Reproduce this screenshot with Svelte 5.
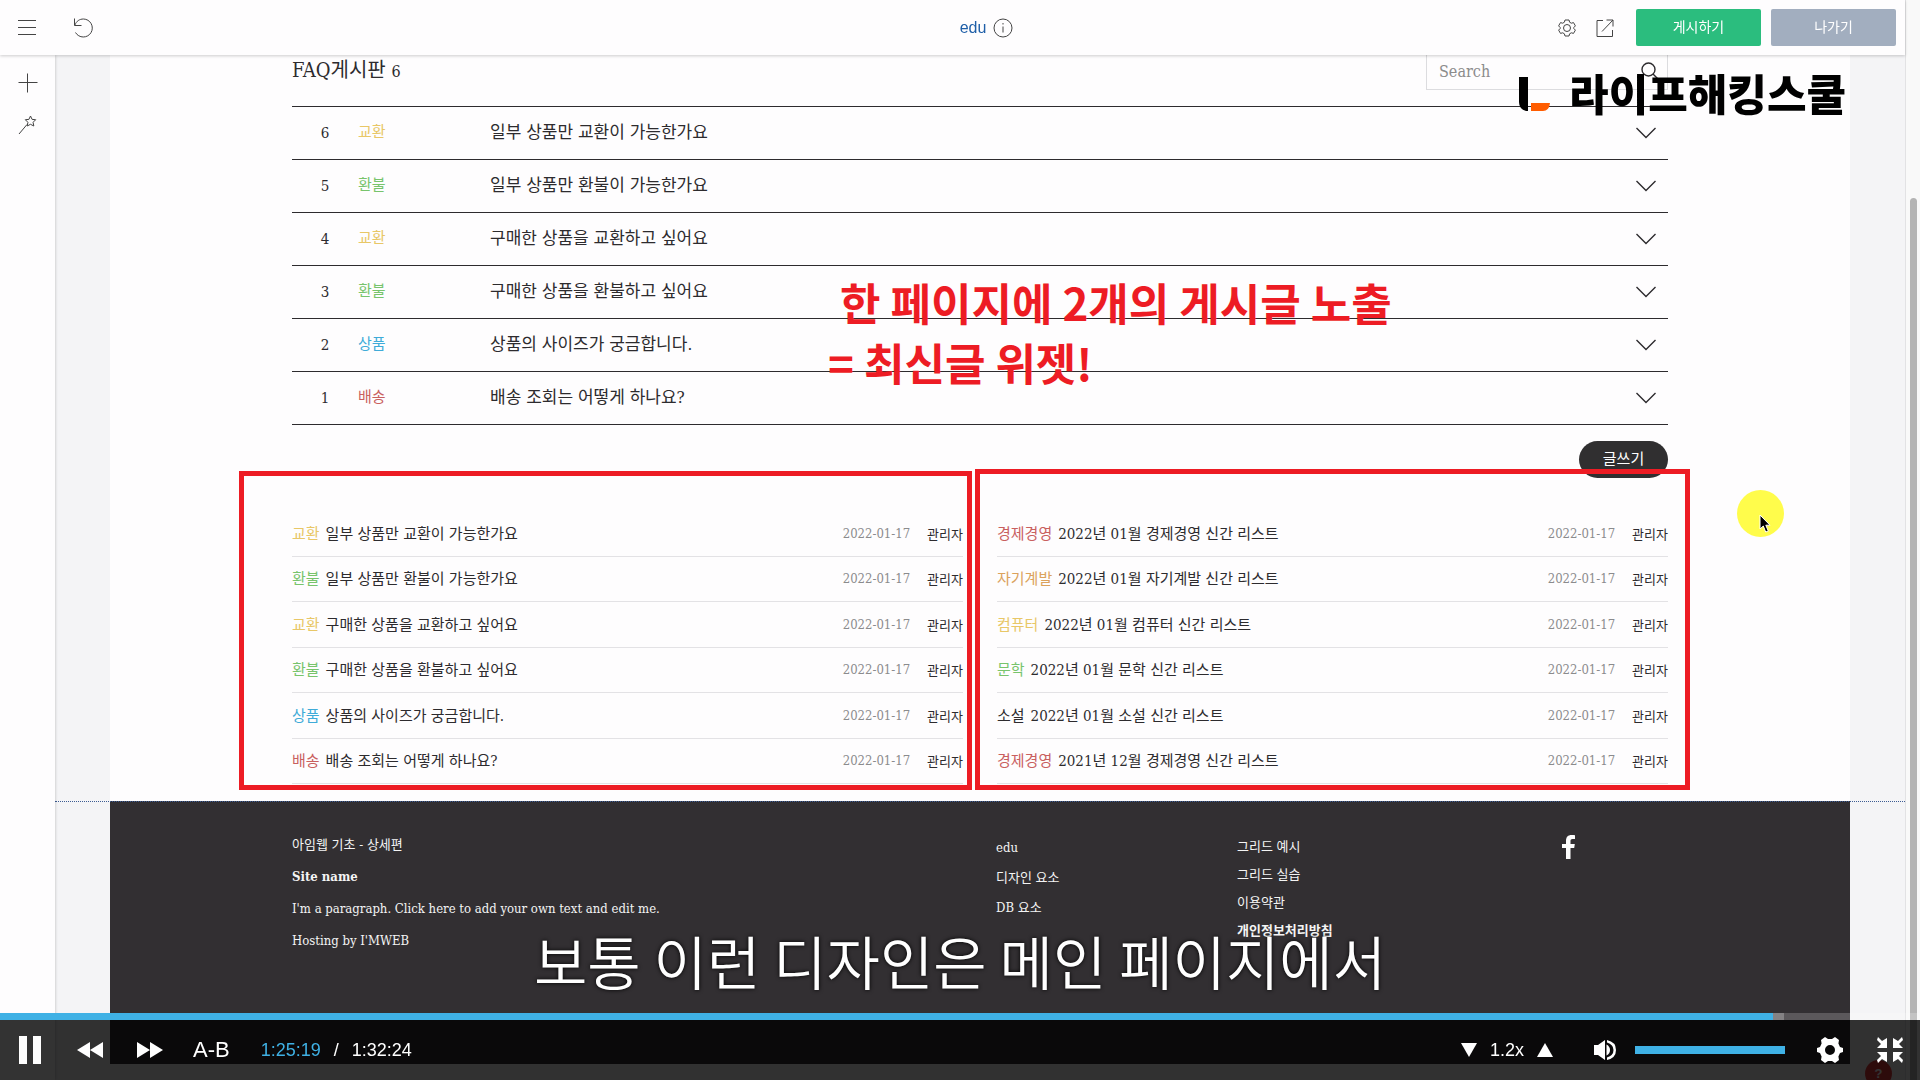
<script lang="ts">
	type Tag = 'yellow' | 'green' | 'blue' | 'red' | 'orange' | 'plain';
	type Post = { tag: string; color: Tag; title: string };

	const faq: Post[] = [
		{ tag: '교환', color: 'yellow', title: '일부 상품만 교환이 가능한가요' },
		{ tag: '환불', color: 'green', title: '일부 상품만 환불이 가능한가요' },
		{ tag: '교환', color: 'yellow', title: '구매한 상품을 교환하고 싶어요' },
		{ tag: '환불', color: 'green', title: '구매한 상품을 환불하고 싶어요' },
		{ tag: '상품', color: 'blue', title: '상품의 사이즈가 궁금합니다.' },
		{ tag: '배송', color: 'red', title: '배송 조회는 어떻게 하나요?' }
	];

	const books: Post[] = [
		{ tag: '경제경영', color: 'red', title: '2022년 01월 경제경영 신간 리스트' },
		{ tag: '자기계발', color: 'orange', title: '2022년 01월 자기계발 신간 리스트' },
		{ tag: '컴퓨터', color: 'yellow', title: '2022년 01월 컴퓨터 신간 리스트' },
		{ tag: '문학', color: 'green', title: '2022년 01월 문학 신간 리스트' },
		{ tag: '소설', color: 'plain', title: '2022년 01월 소설 신간 리스트' },
		{ tag: '경제경영', color: 'red', title: '2021년 12월 경제경영 신간 리스트' }
	];

	const widgets = [faq, books];

	let playing = $state(true);
	let speed = $state(1.2);
	const played = 92.34;
	const buffered = 92.92;
</script>

<header class="topbar">
	<div class="group">
		<button class="icon" aria-label="메뉴">
			<svg width="20" height="20" viewBox="0 0 20 20"><path d="M1 2.500h18M1 9.500h18M1 16.500h18" /></svg>
		</button>
		<button class="icon" aria-label="되돌리기">
			<svg width="22" height="22" viewBox="0 0 22 22"><path d="M1.500 1.500v7h7M1.800 8.200C3.500 4 6.500 2 10.500 2a9 9 0 1 1-8 13.500" /></svg>
		</button>
	</div>
	<div class="page-name">
		<span>edu</span>
		<svg width="20" height="20" viewBox="0 0 20 20"><circle cx="10" cy="10" r="9" /><path d="M10 8.500v6M10 5v1.500" /></svg>
	</div>
	<div class="group right">
		<button class="icon" aria-label="설정">
			<svg width="18" height="18" viewBox="0 0 18 18"><path d="M7 1h4l.6 2.200 1.700 1 2.200-.6 1.900 3.300L15.800 8.500v1l1.600 1.600-1.900 3.300-2.200-.6-1.700 1L11 17H7l-.6-2.200-1.700-1-2.200.6-1.900-3.300L2.200 9.500v-1L.6 6.900l1.900-3.300 2.200.6 1.700-1z" /><circle cx="9" cy="9" r="3.500" /></svg>
		</button>
		<button class="icon" aria-label="새 창">
			<svg width="18" height="18" viewBox="0 0 18 18"><path d="M7 1.500H1v16h15.500V11M10.500 1h6.500v6.500M17 1L6 12.500" /></svg>
		</button>
		<button class="action publish">게시하기</button>
		<button class="action leave">나가기</button>
	</div>
</header>

<aside class="sidebar">
	<button class="icon" aria-label="추가">
		<svg width="20" height="20" viewBox="0 0 20 20"><path d="M9.500 .5v19M.5 9.500h19" /></svg>
	</button>
	<button class="icon" aria-label="디자인">
		<svg width="20" height="20" viewBox="0 0 20 20"><path d="M1 19L9 9.500M12.500 1l1.600 3.400 3.600.3-2.600 2.600.7 3.700-3.300-1.700-3.300 1.700.7-3.700L7.300 4.700l3.600-.3z" /></svg>
	</button>
</aside>

<div class="canvas">
	<main class="site">
		<div class="inner">
			<div class="board-head">
				<h1>FAQ게시판 <small>6</small></h1>
				<label class="search">
					<input type="text" placeholder="Search" aria-label="Search" />
					<svg width="18" height="18" viewBox="0 0 18 18"><circle cx="7.500" cy="7.500" r="6.500" /><path d="M12 12l5 5" /></svg>
				</label>
			</div>

			<table class="board">
				<tbody>
					{#each faq as post, i}
						<tr>
							<td class="num">{faq.length - i}</td>
							<td class="tag {post.color}">{post.tag}</td>
							<td class="title">{post.title}</td>
							<td class="toggle">
								<svg width="20" height="12" viewBox="0 0 20 12"><path d="M.5 1L10 10.500 19.500 1" /></svg>
							</td>
						</tr>
					{/each}
				</tbody>
			</table>

			<div class="board-foot">
				<button class="write">글쓰기</button>
			</div>

			<div class="widgets">
				{#each widgets as posts}
					<section class="widget">
						<ul>
							{#each posts as post}
								<li>
									<span class="tag {post.color}">{post.tag}</span>
									<a href="#post">{post.title}</a>
									<time>2022-01-17</time>
									<span class="author">관리자</span>
								</li>
							{/each}
						</ul>
						<div class="frame"></div>
					</section>
				{/each}
			</div>

			<p class="note">
				<span>한 페이지에 2개의 게시글 노출</span>
				<span>= 최신글 위젯!</span>
			</p>
		</div>

		<footer>
			<div class="inner foot">
				<div class="about">
					<p>아임웹 기초 - 상세편</p>
					<p><b>Site name</b></p>
					<p>I'm a paragraph. Click here to add your own text and edit me.</p>
					<p>Hosting by I'MWEB</p>
				</div>
				<nav class="menu">
					<a href="#edu">edu</a>
					<a href="#design">디자인 요소</a>
					<a href="#db">DB 요소</a>
				</nav>
				<nav class="menu tight">
					<a href="#grid">그리드 예시</a>
					<a href="#practice">그리드 실습</a>
					<a href="#terms">이용약관</a>
					<a href="#privacy"><b>개인정보처리방침</b></a>
				</nav>
				<a class="facebook" href="#facebook" aria-label="Facebook">
					<svg width="14" height="24" viewBox="0 0 14 24"><path d="M4 24V13H0V9h4V6c0-4 2-6 5.500-6 1.500 0 2.500.1 3.500.2V4h-2.400C9 4 8.500 4.800 8.500 6.200V9h4.300l-.6 4H8.500v11z" /></svg>
				</a>
			</div>
		</footer>
	</main>
	<div class="guide"></div>
</div>

<div class="scrollbar"><div class="thumb"></div></div>

<div class="watermark">
	<svg width="32" height="36" viewBox="0 0 32 36">
		<path d="M0 1h9v34H7Q0 33 0 26z" fill="#000" />
		<path d="M12 27h19q-1 8-7 8H12z" fill="#ff5c00" />
	</svg>
	<span>라이프해킹스쿨</span>
</div>

<div class="pointer">
	<svg width="14" height="20" viewBox="0 0 14 20"><path d="M1 1v14l3.300-3 2.400 6 2.600-1-2.500-5.800H11z" /></svg>
</div>

<div class="help">?</div>

<p class="subtitle">보통 이런 디자인은 메인 페이지에서</p>

<div class="player">
	<div class="progress">
		<div class="buffered" style="width: {buffered}%"></div>
		<div class="played" style="width: {played}%"></div>
	</div>
	<div class="controls">
		<button class="pause" aria-label="일시정지" onclick={() => (playing = !playing)}>
			<svg width="22" height="28" viewBox="0 0 22 28"><path d="M0 0h8v28H0zM14 0h8v28h-8z" /></svg>
		</button>
		<button class="rewind" aria-label="뒤로">
			<svg width="26" height="16" viewBox="0 0 26 16"><path d="M13 0v16L0 8zM26 0v16L13 8z" /></svg>
		</button>
		<button class="forward" aria-label="앞으로">
			<svg width="26" height="16" viewBox="0 0 26 16"><path d="M0 0v16l13-8zM13 0v16l13-8z" /></svg>
		</button>
		<button class="repeat">A-B</button>
		<div class="time"><span>1:25:19</span><span>/</span><span>1:32:24</span></div>
		<div class="speed">
			<button aria-label="느리게" onclick={() => (speed -= 0.1)}>
				<svg width="16" height="14" viewBox="0 0 16 14"><path d="M0 0h16L8 14z" /></svg>
			</button>
			<span>{speed.toFixed(1)}x</span>
			<button aria-label="빠르게" onclick={() => (speed += 0.1)}>
				<svg width="16" height="14" viewBox="0 0 16 14"><path d="M0 14h16L8 0z" /></svg>
			</button>
		</div>
		<button class="sound" aria-label="음소거">
			<svg width="22" height="20" viewBox="0 0 22 20"><path d="M0 5h4l7-5v20l-7-5H0z" /><path d="M12.500 4.500q3.500 2 3.500 5.500t-3.500 5.500zM13 0q9 2 9 10t-9 10v-2.500q6.500-2 6.500-7.500T13 2.500z" /></svg>
		</button>
		<input class="volume" type="range" min="0" max="100" value="100" aria-label="음량" />
		<button class="settings" aria-label="재생 설정">
			<svg width="26" height="26" viewBox="0 0 26 26"><path fill-rule="evenodd" d="M8 0l3 2h4l3-2 4 3-.6 3.500L23 10l3 1v4l-3 1-1.600 3.500L22 23l-4 3-3-2h-4l-3 2-4-3 .6-3.500L3 16l-3-1v-4l3-1 1.600-3.500L4 3zM13 8a5 5 0 1 0 0 10 5 5 0 0 0 0-10z" /></svg>
		</button>
		<button class="shrink" aria-label="전체 화면 종료">
			<svg width="26" height="26" viewBox="0 0 26 26"><path d="M1 0l4 4 5-3v10H0l4-4-4-4zM25 0l-4 4-5-3v10h10l-4-4 4-4zM1 26l4-4 5 3V15H0l4 4-4 4zM25 26l-4-4-5 3V15h10l-4 4 4 4z" /></svg>
		</button>
	</div>
</div>

<style>
	:global(body) {
		background: #fefdfe;
		color: #2d2b2e;
		font-family: 'DejaVu Serif Condensed', 'Noto Sans CJK KR', serif;
		overflow: hidden;
	}

	button {
		padding: 0;
		border: 0;
		background: none;
		color: inherit;
		font: inherit;
		cursor: pointer;
	}

	svg {
		display: block;
	}

	a {
		color: inherit;
		text-decoration: none;
	}

	.topbar {
		position: fixed;
		top: 0;
		left: 0;
		right: 15px;
		z-index: 3;
		display: grid;
		grid-template-columns: 1fr auto 1fr;
		align-items: center;
		box-sizing: border-box;
		height: 55px;
		padding: 0 9px 0 17px;
		background: #fefdfe;
		box-shadow: 0 1px 3px rgba(0, 0, 0, 0.2);
		font-family: 'Noto Sans CJK KR', sans-serif;
	}

	.group {
		display: flex;
		align-items: center;
		gap: 36px;
	}

	.icon svg,
	.page-name svg,
	.search svg,
	.toggle svg {
		fill: none;
		stroke: #444;
		stroke-width: 1;
	}

	.page-name {
		display: flex;
		align-items: center;
		gap: 7px;
		margin-left: 60px;
		color: #1f5fa8;
		font-family: 'Liberation Sans', sans-serif;
		font-size: 16px;
	}

	.right {
		justify-content: flex-end;
		gap: 20px;
	}

	.action {
		width: 125px;
		height: 37px;
		padding-bottom: 3px;
		border-radius: 2px;
		color: #fff;
		font-size: 14px;
	}

	.publish {
		margin-left: 2px;
		background: #2bbd7e;
	}

	.leave {
		margin-left: -10px;
		background: #a2aebf;
	}

	.sidebar {
		position: fixed;
		top: 55px;
		bottom: 0;
		left: 0;
		z-index: 2;
		display: flex;
		flex-direction: column;
		align-items: center;
		gap: 22px;
		box-sizing: border-box;
		width: 55px;
		padding-top: 18px;
		background: #fefdfe;
		box-shadow: 0 0 3px rgba(0, 0, 0, 0.25);
	}

	.canvas {
		position: relative;
		min-height: 100vh;
		box-sizing: border-box;
		padding: 0 55px 16px 110px;
		margin-right: 15px;
		background: #f4f4f6;
	}

	.site {
		background: #fefdfe;
	}

	.inner {
		position: relative;
		max-width: 1376px;
		margin: 0 auto;
	}

	.board-head {
		display: flex;
		justify-content: space-between;
		align-items: center;
		padding: 48px 0 16px;
	}

	h1 {
		margin: 0;
		padding-top: 4px;
		font-size: 20px;
		line-height: 28px;
		font-weight: 400;
	}

	small {
		font-size: 16px;
	}

	.search {
		display: flex;
		align-items: center;
		box-sizing: border-box;
		width: 242px;
		height: 42px;
		padding: 4px 8px 0 12px;
		border: 1px solid #dcdcdf;
	}

	.search input {
		flex: 1;
		min-width: 0;
		padding: 0;
		border: 0;
		outline: 0;
		background: none;
		font: inherit;
		font-size: 16px;
	}

	.search input::placeholder {
		color: #8c8c8c;
	}

	.board {
		width: 100%;
		border-collapse: collapse;
		border-top: 1px solid #2d2b2e;
	}

	.board td {
		height: 52px;
		padding: 0;
		border-bottom: 1px solid #2d2b2e;
		line-height: 24px;
	}

	.board .num {
		width: 66px;
		font-size: 15px;
		text-align: center;
	}

	.board .tag,
	.board .title {
		height: 50px;
		padding-bottom: 2px;
	}

	.board .tag {
		width: 132px;
		font-size: 15px;
	}

	.board .title {
		font-size: 17px;
	}

	.board .toggle {
		width: 32px;
	}

	.search svg,
	.toggle svg {
		stroke: #2d2b2e;
		stroke-width: 1.4;
	}

	.yellow {
		color: #e8c767;
	}

	.green {
		color: #78c46c;
	}

	.blue {
		color: #3fabd8;
	}

	.red {
		color: #c9605f;
	}

	.orange {
		color: #dba25c;
	}

	.board-foot {
		display: flex;
		justify-content: flex-end;
		padding: 16px 0 33px;
	}

	.write {
		width: 89px;
		height: 37px;
		padding-bottom: 4px;
		border-radius: 19px;
		background: #302f30;
		color: #fff;
		font-size: 15px;
	}

	.widgets {
		display: grid;
		grid-template-columns: 1fr 1fr;
		gap: 34px;
		padding-bottom: 17px;
	}

	.widget {
		position: relative;
	}

	ul {
		display: grid;
		grid-auto-rows: 46px 45px;
		margin: 0;
		padding: 0;
		list-style: none;
	}

	li {
		display: flex;
		align-items: center;
		padding-bottom: 3px;
		border-bottom: 1px solid #e3e2e5;
		font-size: 15px;
	}

	li a {
		flex: 1;
		margin-left: 6px;
	}

	time,
	.author {
		padding-top: 2px;
		font-size: 13px;
	}

	time {
		margin-right: 17px;
		color: #8b8b8d;
	}

	.frame {
		position: absolute;
		top: -40px;
		right: -9px;
		bottom: -6px;
		left: -53px;
		border: 5px solid #ed1c24;
		pointer-events: none;
	}

	.widget:last-child .frame {
		top: -42px;
		right: -22px;
		left: -22px;
	}

	.note {
		position: absolute;
		top: 272px;
		left: 536px;
		margin: 0;
		color: #ed1c24;
		font-family: 'Noto Sans CJK KR', sans-serif;
		font-size: 44px;
		font-weight: 700;
		line-height: 60px;
	}

	.note span {
		display: block;
	}

	.note span:first-child {
		margin-left: 12px;
	}

	footer {
		min-height: 263px;
		background: #322f32;
		color: #f4f4f4;
		font-size: 13px;
	}

	.foot {
		display: grid;
		grid-template-columns: 704px 241px 325px 1fr;
	}

	.about {
		display: grid;
		gap: 12px;
		padding-top: 34px;
	}

	.about p {
		margin: 0;
		line-height: 20px;
	}

	.menu {
		display: grid;
		align-content: start;
		gap: 10px;
		padding-top: 37px;
		line-height: 20px;
	}

	.tight {
		gap: 8px;
		padding-top: 36px;
	}

	.facebook {
		padding-top: 34px;
	}

	.facebook svg,
	.player svg {
		fill: #fff;
	}

	.guide {
		position: absolute;
		top: 801px;
		left: 55px;
		right: 0;
		border-top: 1px dotted #3d5c93;
	}

	.scrollbar {
		position: fixed;
		top: 0;
		right: 0;
		bottom: 0;
		box-sizing: border-box;
		width: 15px;
		padding: 198px 3px 0 4px;
		background: #f9f9f9;
		border-left: 1px solid #e2e2e4;
	}

	.thumb {
		height: 100%;
		border-radius: 4px 4px 0 0;
		background: #b4b4b4;
	}

	.watermark {
		position: fixed;
		top: 60px;
		right: 74px;
		z-index: 4;
		display: flex;
		align-items: center;
		gap: 18px;
		color: #000;
		font-family: 'Noto Sans CJK KR', sans-serif;
		font-size: 43px;
		font-weight: 900;
		line-height: 64px;
	}

	.watermark svg {
		margin-top: 4px;
	}

	.pointer {
		position: fixed;
		top: 490px;
		right: 136px;
		display: grid;
		place-items: end center;
		box-sizing: border-box;
		width: 47px;
		height: 47px;
		padding: 0 0 3px 10px;
		border-radius: 50%;
		background: #fffc4b;
	}

	.pointer svg {
		fill: #000;
		stroke: #fff;
	}

	.help {
		position: fixed;
		right: 28px;
		bottom: -7px;
		z-index: 4;
		width: 27px;
		border-radius: 50%;
		background: #e23b3b;
		color: #fff;
		font: 700 13px/27px 'Liberation Sans', sans-serif;
		text-align: center;
	}

	.subtitle {
		position: fixed;
		right: 0;
		bottom: 90px;
		left: 0;
		z-index: 4;
		margin: 0;
		color: #fff;
		font-family: 'Noto Sans CJK KR', sans-serif;
		font-size: 58px;
		font-weight: 350;
		line-height: 60px;
		text-align: center;
		text-shadow: 0 0 4px #000;
	}

	.player {
		position: fixed;
		right: 0;
		bottom: 0;
		left: 0;
		z-index: 5;
		color: #fff;
		font-family: 'Liberation Sans', sans-serif;
		font-size: 18px;
	}

	.progress {
		position: relative;
		height: 7px;
		background: rgba(255, 255, 255, 0.2);
	}

	.progress div {
		position: absolute;
		height: 100%;
	}

	.buffered {
		background: rgba(255, 255, 255, 0.25);
	}

	.played {
		background: #3fb1e5;
	}

	.controls {
		display: flex;
		align-items: center;
		height: 60px;
		padding: 0 17px 0 19px;
		background: rgba(0, 0, 0, 0.8);
	}

	.rewind {
		margin-left: 36px;
	}

	.forward {
		margin-left: 34px;
	}

	.repeat {
		margin-left: 30px;
		font-size: 22px;
	}

	.time {
		display: flex;
		gap: 13px;
		margin-left: 31px;
	}

	.time span:first-child {
		color: #3fb1e5;
	}

	.speed {
		display: flex;
		align-items: center;
		gap: 13px;
		margin-left: auto;
	}

	.sound {
		margin-left: 41px;
	}

	.volume {
		width: 150px;
		height: 8px;
		margin: 0 0 0 19px;
		appearance: none;
		background: #3fb1e5;
	}

	.volume::-webkit-slider-thumb {
		appearance: none;
		width: 0;
	}

	.settings {
		margin-left: 32px;
	}

	.shrink {
		margin-left: 34px;
	}
</style>
